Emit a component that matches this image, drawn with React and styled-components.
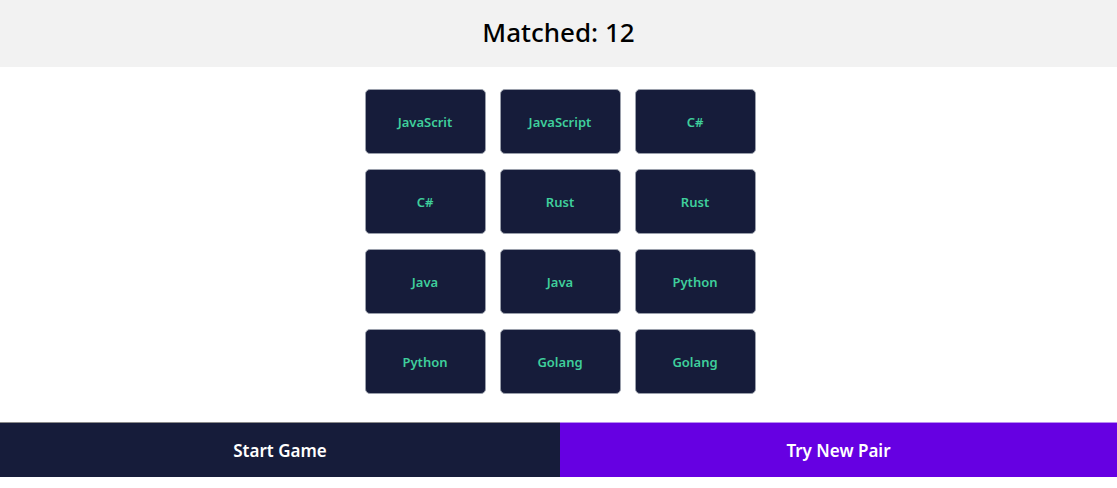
import React from 'react';
import styled, { createGlobalStyle } from 'styled-components';

const Global = createGlobalStyle`
  body {
    margin: 0;
    background: #fff;
    font-family: "Noto Sans", "Open Sans", sans-serif;
  }
`;

const Header = styled.header`
  height: 67px;
  background: #f2f2f2;
  display: flex;
  align-items: center;
  justify-content: center;
`;

const Title = styled.h1`
  margin: 0 0 4px;
  font-size: 26px;
  font-weight: 500;
  color: #000;
`;

const Board = styled.div`
  display: grid;
  grid-template-columns: repeat(3, 121px);
  grid-auto-rows: 65px;
  column-gap: 14px;
  row-gap: 15px;
  justify-content: center;
  padding: 22px 0 0 3px;
`;

const Card = styled.div`
  background: #161c3a;
  border: 1px solid #9a9fab;
  border-radius: 5px;
  display: flex;
  align-items: center;
  justify-content: center;
  color: #3fcf9c;
  font-size: 13px;
  font-weight: 600;
`;

const Footer = styled.div`
  display: flex;
  margin-top: 28px;
`;

const Action = styled.button`
  flex: 1;
  height: 55px;
  border: none;
  border-top: 1px solid ${p => p.$edge};
  background: ${p => p.$bg};
  color: #fff;
  font-family: inherit;
  font-size: 17px;
  font-weight: 600;
  cursor: pointer;
`;

const cards = ['JavaScrit', 'JavaScript', 'C#', 'C#', 'Rust', 'Rust', 'Java', 'Java', 'Python', 'Python', 'Golang', 'Golang'];

export default function App() {
  return (
    <>
      <Global />
      <Header>
        <Title>Matched: 12</Title>
      </Header>
      <Board>
        {cards.map((c, i) => <Card key={i}>{c}</Card>)}
      </Board>
      <Footer>
        <Action $bg="#161c3a" $edge="#8a8a8a" style={{ flex: '0 0 560px' }}>Start Game</Action>
        <Action $bg="#6600e2" $edge="#b98cf0">Try New Pair</Action>
      </Footer>
    </>
  );
}
